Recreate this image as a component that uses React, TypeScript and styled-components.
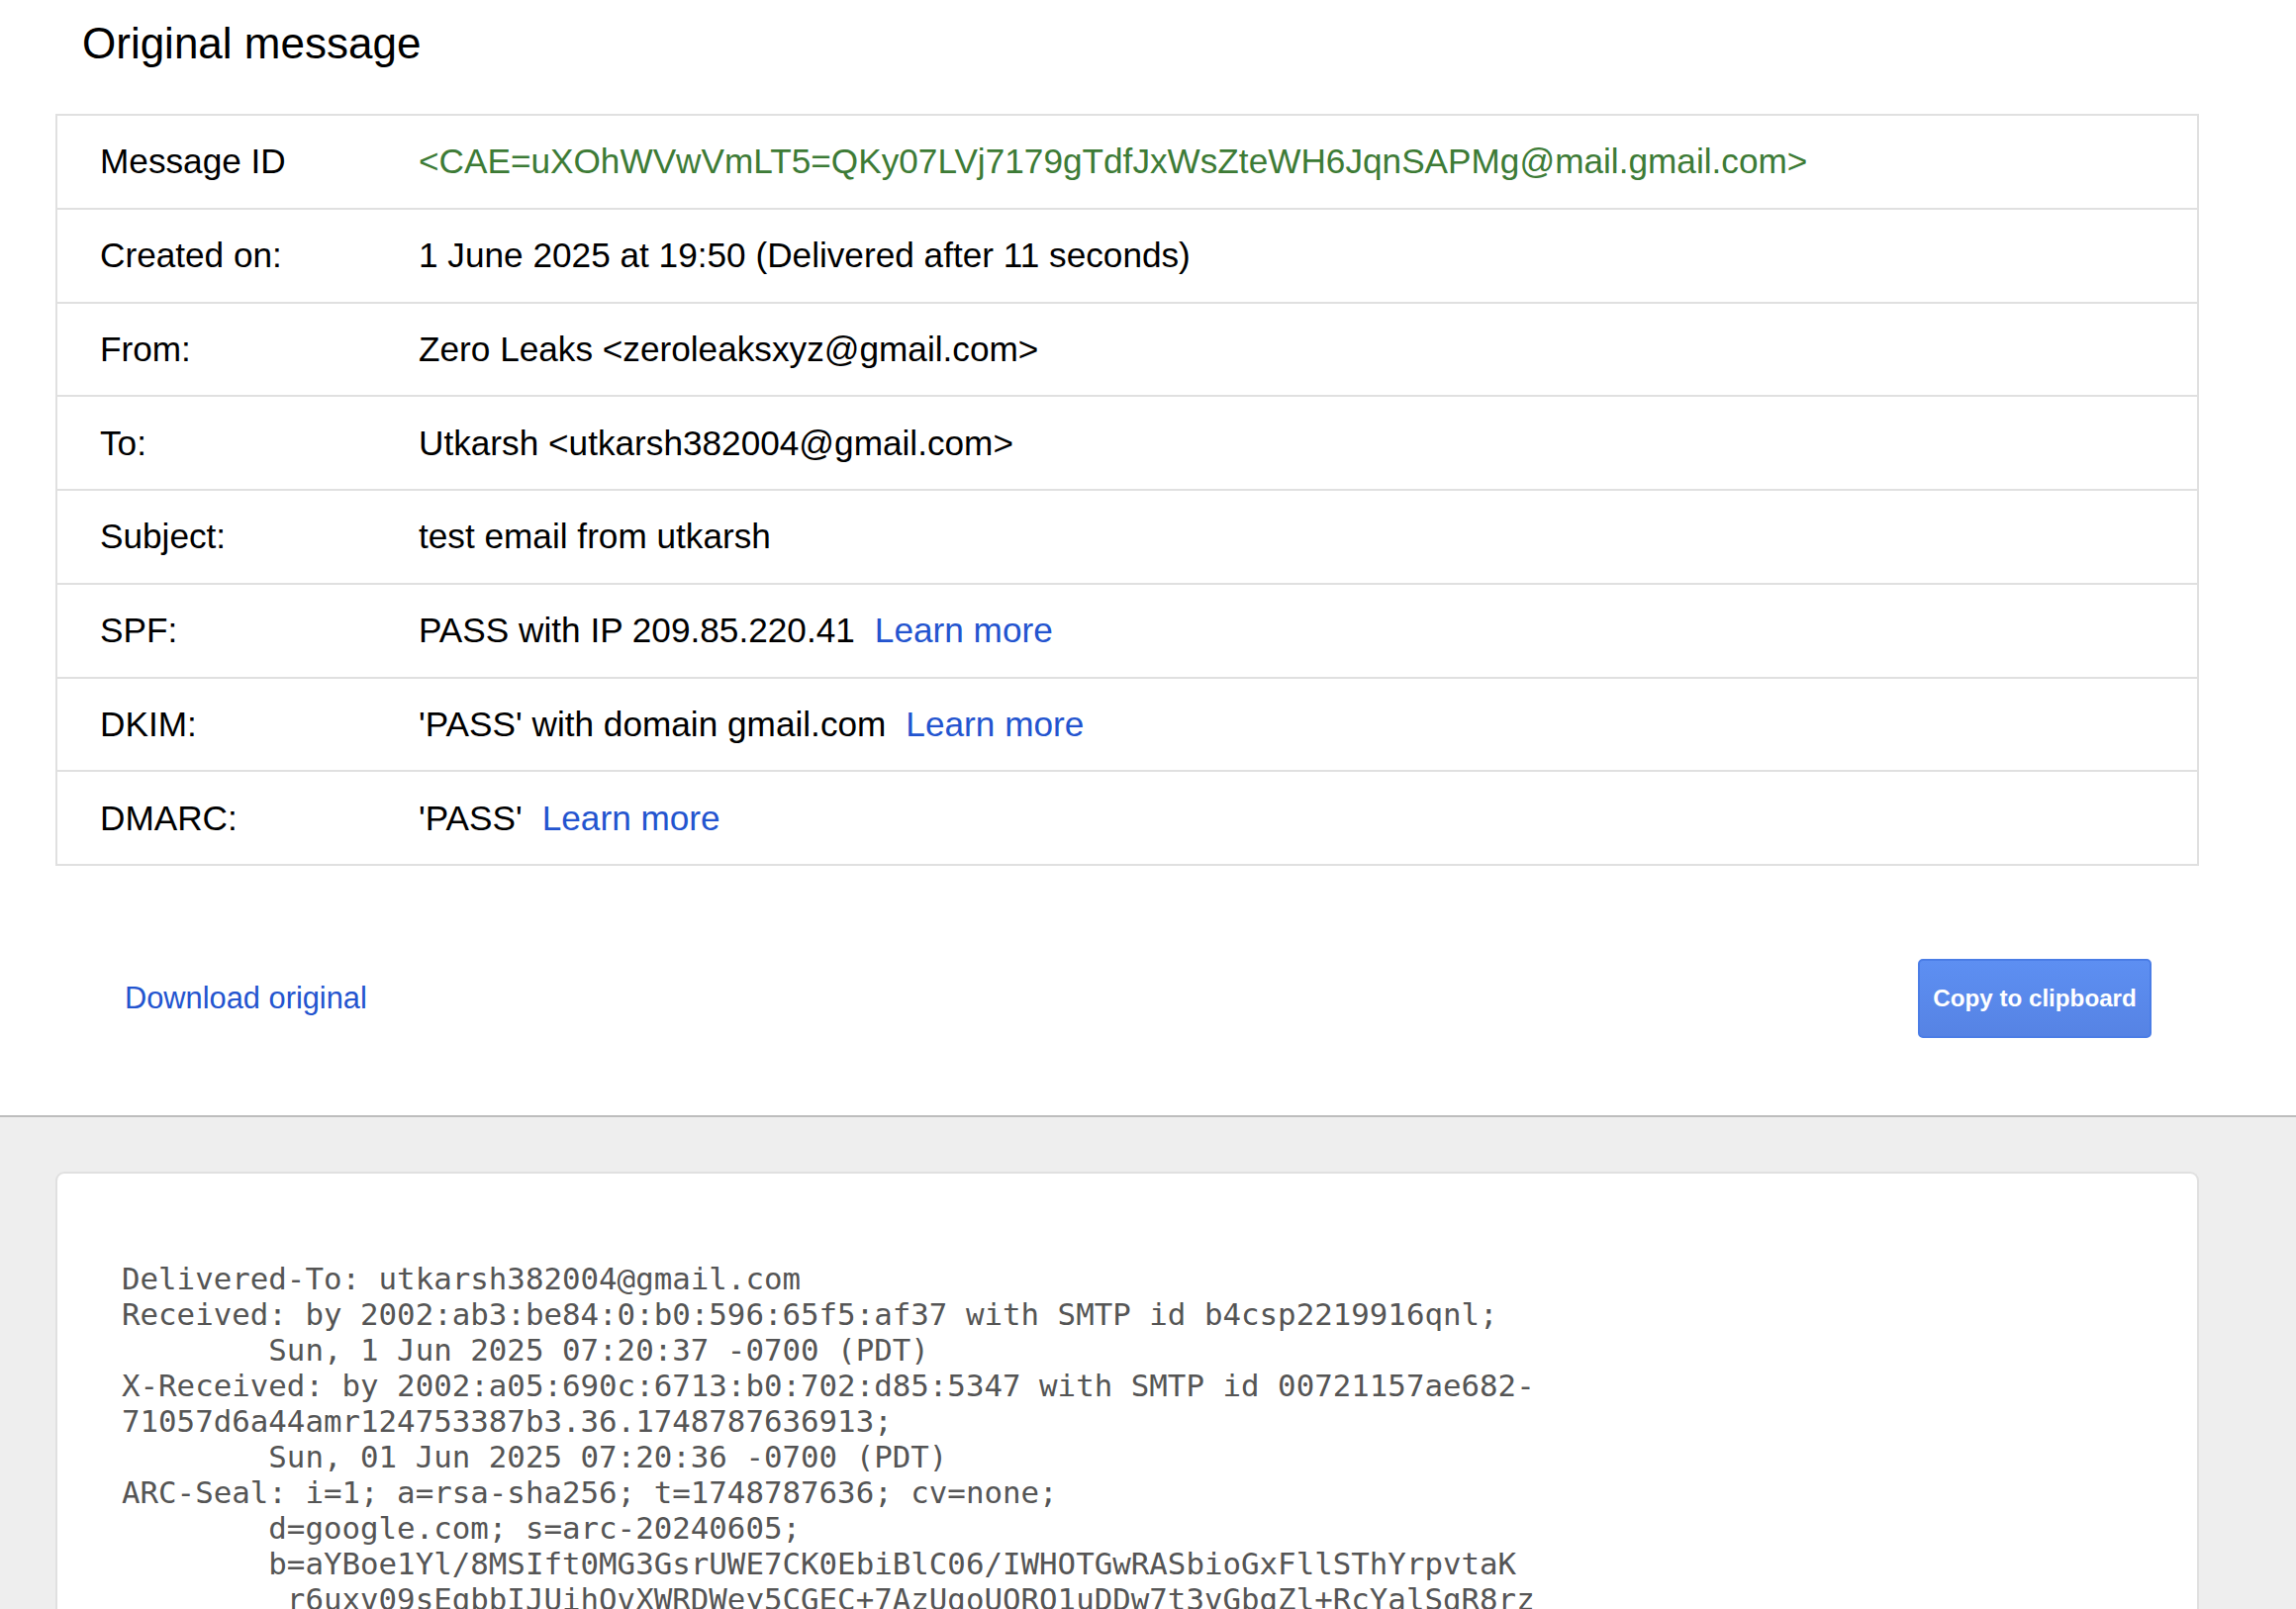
import React from "react";
import styled, { createGlobalStyle } from "styled-components";

const GlobalStyle = createGlobalStyle`
  html, body {
    margin: 0;
    padding: 0;
    background: #ffffff;
    overflow: hidden;
  }
  body {
    font-family: "Liberation Sans", Arial, sans-serif;
    color: #000;
  }
`;

const Page = styled.div`
  display: flex;
  flex-direction: column;
  min-height: 1626px;
`;

const TopSection = styled.section`
  background: #ffffff;
  display: flex;
  flex-direction: column;
`;

const Title = styled.h1`
  margin: 0;
  padding: 19px 0 0 83px;
  font-size: 44px;
  line-height: 50px;
  font-weight: 400;
  color: #000;
`;

const Table = styled.div`
  margin: 46px 98px 0 56px;
  border: 2px solid #e0e0e0;
  display: flex;
  flex-direction: column;
`;

const Row = styled.div<{ $last?: boolean }>`
  display: grid;
  grid-template-columns: 365px 1fr;
  align-items: center;
  height: 92.75px;
  border-bottom: ${(p) => (p.$last ? "none" : "2px solid #e0e0e0")};
  font-size: 35.2px;
`;

const Label = styled.div`
  padding-left: 43px;
  color: #000;
  white-space: nowrap;
`;

const Value = styled.div<{ $green?: boolean }>`
  color: ${(p) => (p.$green ? "#3d7b36" : "#000")};
  white-space: nowrap;
`;

const LearnMore = styled.a`
  color: #2354cf;
  text-decoration: none;
  margin-left: 20px;
  cursor: pointer;
`;

const Footer = styled.div`
  display: flex;
  align-items: center;
  justify-content: space-between;
  padding: 94px 146px 78px 126px;
`;

const DownloadLink = styled.a`
  font-size: 30.8px;
  color: #2354cf;
  text-decoration: none;
  cursor: pointer;
`;

const CopyButton = styled.button`
  width: 236px;
  height: 80px;
  border: 2px solid #4b7de6;
  border-radius: 5px;
  background: linear-gradient(#5d8ff2, #5683e4);
  color: #ffffff;
  font-family: "Liberation Sans", Arial, sans-serif;
  font-size: 24.2px;
  font-weight: 700;
  padding: 0;
  cursor: pointer;
`;

const RawSection = styled.section`
  flex: 1;
  background: #eeeeee;
  border-top: 2px solid #bdbdbd;
  padding-top: 55px;
  display: flex;
  flex-direction: column;
`;

const RawCard = styled.div`
  flex: 1;
  margin: 0 98px 0 56px;
  background: #ffffff;
  border: 2px solid #e0e0e0;
  border-bottom: none;
  border-radius: 9px 9px 0 0;
`;

const RawText = styled.pre`
  margin: 0;
  padding: 88px 0 60px 65px;
  font-family: "DejaVu Sans Mono", "Liberation Mono", monospace;
  font-size: 30.8px;
  line-height: 36px;
  color: #555555;
  white-space: pre;
`;

type Field = {
  label: string;
  value: string;
  green?: boolean;
  link?: boolean;
};

const fields: Field[] = [
  {
    label: "Message ID",
    value: "<CAE=uXOhWVwVmLT5=QKy07LVj7179gTdfJxWsZteWH6JqnSAPMg@mail.gmail.com>",
    green: true,
  },
  { label: "Created on:", value: "1 June 2025 at 19:50 (Delivered after 11 seconds)" },
  { label: "From:", value: "Zero Leaks <zeroleaksxyz@gmail.com>" },
  { label: "To:", value: "Utkarsh <utkarsh382004@gmail.com>" },
  { label: "Subject:", value: "test email from utkarsh" },
  { label: "SPF:", value: "PASS with IP 209.85.220.41", link: true },
  { label: "DKIM:", value: "'PASS' with domain gmail.com", link: true },
  { label: "DMARC:", value: "'PASS'", link: true },
];

const raw = [
  "Delivered-To: utkarsh382004@gmail.com",
  "Received: by 2002:ab3:be84:0:b0:596:65f5:af37 with SMTP id b4csp2219916qnl;",
  "        Sun, 1 Jun 2025 07:20:37 -0700 (PDT)",
  "X-Received: by 2002:a05:690c:6713:b0:702:d85:5347 with SMTP id 00721157ae682-",
  "71057d6a44amr124753387b3.36.1748787636913;",
  "        Sun, 01 Jun 2025 07:20:36 -0700 (PDT)",
  "ARC-Seal: i=1; a=rsa-sha256; t=1748787636; cv=none;",
  "        d=google.com; s=arc-20240605;",
  "        b=aYBoe1Yl/8MSIft0MG3GsrUWE7CK0EbiBlC06/IWHOTGwRASbioGxFllSThYrpvtaK",
  "         r6uxv09sEgbbIJUihOvXWRDWey5CGEC+7AzUgoUORO1uDDw7t3vGbgZl+RcYalSgR8rz",
].join("\n");

export default function App() {
  return (
    <>
      <GlobalStyle />
      <Page>
        <TopSection>
          <Title>Original message</Title>
          <Table>
            {fields.map((f, i) => (
              <Row key={f.label} $last={i === fields.length - 1}>
                <Label>{f.label}</Label>
                <Value $green={f.green}>
                  {f.value}
                  {f.link && <LearnMore>Learn more</LearnMore>}
                </Value>
              </Row>
            ))}
          </Table>
          <Footer>
            <DownloadLink>Download original</DownloadLink>
            <CopyButton>Copy to clipboard</CopyButton>
          </Footer>
        </TopSection>
        <RawSection>
          <RawCard>
            <RawText>{raw}</RawText>
          </RawCard>
        </RawSection>
      </Page>
    </>
  );
}
